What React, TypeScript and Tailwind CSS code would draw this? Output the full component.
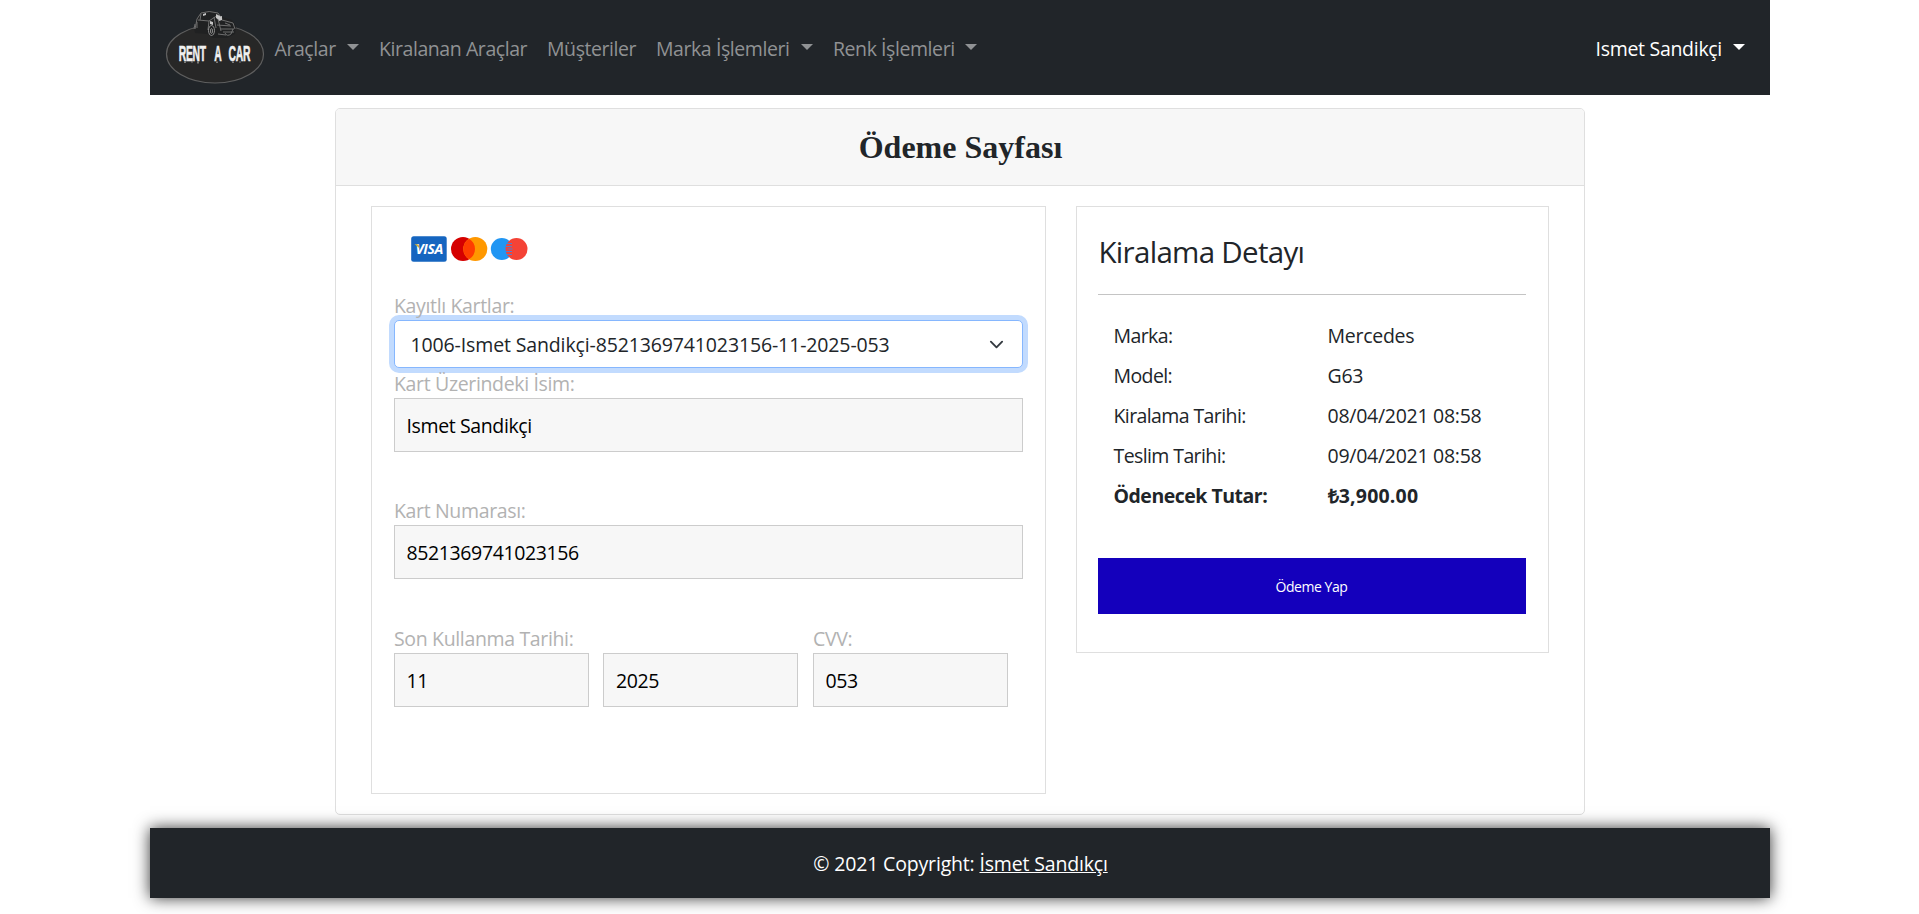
import type { ReactNode } from "react";

function Caret() {
  return (
    <svg className="mb-[5px] h-[6px] w-3 shrink-0" viewBox="0 0 12 6" fill="currentColor" aria-hidden="true">
      <path d="M0 0h12L6 6z" />
    </svg>
  );
}

function Logo() {
  return (
    <svg className="block h-[78px] w-[100px]" viewBox="0 0 100 78" aria-label="Rent a car">
      <ellipse cx="50" cy="45" rx="48.5" ry="29" fill="#272727" stroke="#5f5f5f" strokeWidth="1.2" />
      <path d="M29 19l3-9 4-7q8-3 16 0l5 5 10 3 4 6-1 8-8 4H48l-5-4-13-1z" fill="#202122" />
      <g fill="none" stroke="#777" strokeWidth="0.900">
        <path d="M30 20l2-10 4-6q8-3 17 0l4 6M33 11l11 1 9-6M44 12l-1 9M36 5l-1 6M29 20l1-5M32 13v6M57 11l11 3 2 6M52 16l14 1M56 20h13M58 23h11M53 25l8 1M53 10l3 12M49 8l2 11M60 14l5 2" />
        <ellipse cx="46.500" cy="21.500" rx="3" ry="5" stroke="#999" />
        <ellipse cx="46.500" cy="22" rx="1" ry="2.500" stroke="#999" />
        <path d="M60 24q2 4 6 1l2-5" />
      </g>
      <path d="M51 5l4 2-1 4-3-2zM38 5l3-1v2l-3 1zM53 8l4-1v4l-3 1zM45 12l3 1v3l-3-1z" fill="#c4c4c4" />
      <g
        transform="scale(0.470 1)"
        fontFamily="'Liberation Sans', sans-serif"
        fontWeight="700"
        fontSize="22"
        fill="#f1f1f1"
        stroke="#f1f1f1"
        strokeWidth="0.600"
      >
        <text x="29" y="52.500">RENT</text>
        <text x="105" y="52.500">A</text>
        <text x="135" y="52.500">CAR</text>
      </g>
      <path d="M20 52.500v1.500M27 52.500v1M33 52.500v2M52 52.500v1.500M68 52.500v1.500M75 52.500v1" stroke="#b5b5b5" strokeWidth="1.200" />
    </svg>
  );
}

function CardBrands() {
  return (
    <svg className="block h-[30px] w-[120px]" viewBox="0 0 120 30" aria-label="Visa, Mastercard, Maestro">
      <rect x="0.200" y="2.200" width="35.500" height="25.600" rx="2.500" fill="#1565c0" />
      <text
        x="18.200"
        y="19.800"
        textAnchor="middle"
        textLength="27.500"
        lengthAdjust="spacingAndGlyphs"
        fontFamily="'Open Sans', sans-serif"
        fontWeight="700"
        fontStyle="italic"
        fontSize="13.500"
        fill="#fff"
      >
        VISA
      </text>
      <path d="M3.500 10l4 .4 1.200 4z" fill="#c9a93a" />
      <circle cx="52" cy="15" r="12" fill="#d50000" />
      <circle cx="64.300" cy="15" r="12" fill="#ff9800" />
      <path d="M58.150 4.700a12 12 0 0 1 0 20.600a12 12 0 0 1 0-20.600z" fill="#ff3d00" />
      <circle cx="90.800" cy="15" r="11" fill="#2196f3" />
      <circle cx="105.500" cy="15" r="11" fill="#f44336" />
      <path d="M96 9.500h5M95 12.500h6M96.500 15h5M95 17.500h6M96 20.500h5" stroke="#4f7fd0" strokeWidth="1.200" />
    </svg>
  );
}

function Label({ children }: { children: ReactNode }) {
  return <label className="block h-[30px] pt-px pl-[0.500px] leading-[30px] text-[#b2b2b2]">{children}</label>;
}

function Field({ value }: { value: string }) {
  return (
    <input
      readOnly
      value={value}
      className="block h-[54px] w-full border border-[#ccc] bg-[#f7f7f7] pr-[11px] pl-3 tracking-[-0.380px] text-black outline-none"
    />
  );
}

const details = [
  ["Marka:", "Mercedes"],
  ["Model:", "G63"],
  ["Kiralama Tarihi:", "08/04/2021 08:58"],
  ["Teslim Tarihi:", "09/04/2021 08:58"],
];

export default function App() {
  return (
    <div className="h-[914px] overflow-hidden bg-white font-['Open_Sans',sans-serif] text-[19.500px] leading-[30px] tracking-[-0.350px] text-[#212529]">
      <div className="mx-auto w-[1620px]">
        <nav className="flex h-[95px] items-center justify-between bg-[#212529] pr-[25px] pl-[15px] tracking-[-0.430px] text-[#909294]">
          <div className="flex items-center">
            <Logo />
            <ul className="flex items-center pt-[3px] pl-[10px]">
              <li className="flex w-[104.500px] items-center justify-between pr-[20.500px]">Araçlar<Caret /></li>
              <li className="w-[168px]">Kiralanan Araçlar</li>
              <li className="w-[109px]">Müşteriler</li>
              <li className="flex w-[177px] items-center justify-between pr-5">Marka İşlemleri<Caret /></li>
              <li className="flex w-[144px] items-center justify-between">Renk İşlemleri<Caret /></li>
            </ul>
          </div>
          <div className="flex items-center gap-[10.500px] pt-[3px] tracking-[-0.300px] text-white">Ismet Sandikçi<Caret /></div>
        </nav>

        <main className="mx-auto mt-[13px] h-[707px] w-[1250px] rounded-[5px] border border-[#dfdfdf]">
          <header className="flex h-[77px] items-center justify-center rounded-t-[4px] border-b border-[#dfdfdf] bg-[#f7f7f7]">
            <h1 className="pl-0.5 font-['Liberation_Serif',serif] text-[32px] font-bold tracking-normal">Ödeme Sayfası</h1>
          </header>

          <div className="flex items-start gap-[30px] pt-5 pl-[35px]">
            <section className="h-[588px] w-[675px] border border-[#dfdfdf] px-[22px]">
              <div className="pt-[27px] pb-[26px] pl-[17px]">
                <CardBrands />
              </div>
              <Label>Kayıtlı Kartlar:</Label>
              <div className="flex h-12 items-center justify-between rounded-[5px] border border-[#86b7fe] bg-white pr-[18px] pl-4 tracking-[-0.130px] ring-[5px] ring-[#c2dbfe]">
                <span className="pt-0.5">1006-Ismet Sandikçi-8521369741023156-11-2025-053</span>
                <svg className="size-[15px]" viewBox="0 0 16 16" fill="none" stroke="#343a40" strokeWidth="2" strokeLinecap="round" strokeLinejoin="round" aria-hidden="true">
                  <path d="M2 5l6 6 6-6" />
                </svg>
              </div>
              <Label>Kart Üzerindeki İsim:</Label>
              <Field value="Ismet Sandikçi" />
              <div className="pt-[43px]">
                <Label>Kart Numarası:</Label>
                <Field value="8521369741023156" />
              </div>
              <div className="grid grid-cols-[195px_195px_195px] items-end gap-[14.500px] pt-11">
                <div>
                  <Label>Son Kullanma Tarihi:</Label>
                  <Field value="11" />
                </div>
                <Field value="2025" />
                <div>
                  <Label>CVV:</Label>
                  <Field value="053" />
                </div>
              </div>
            </section>

            <section className="h-[447px] w-[473px] border border-[#dfdfdf] pr-[22px] pl-[21px]">
              <h2 className="pt-[27px] pl-px text-[29.500px] leading-9 tracking-[-0.700px]">Kiralama Detayı</h2>
              <hr className="mt-6 border-[#c4c4c4]" />
              <dl className="pt-[21px] pl-4">
                {details.map(([name, value]) => (
                  <div key={name} className="flex h-10 items-center">
                    <dt className="w-[214px] tracking-[-0.600px]">{name}</dt>
                    <dd className="tracking-[-0.270px]">{value}</dd>
                  </div>
                ))}
                <div className="flex h-10 items-center font-bold">
                  <dt className="w-[214px] tracking-[-0.500px]">Ödenecek Tutar:</dt>
                  <dd className="tracking-[0.200px]">₺3,900.00</dd>
                </div>
              </dl>
              <button className="mt-[42px] block h-14 w-full bg-[#1400bc] pt-px text-[14px] tracking-[-0.450px] text-white">Ödeme Yap</button>
            </section>
          </div>
        </main>

        <footer className="mt-[13px] flex h-[70px] items-center justify-center bg-[#212529] pt-0.5 pl-0.5 tracking-[-0.170px] text-white shadow-[0_0_15px_rgba(0,0,0,0.8)]">
          <p>
            © 2021 Copyright: <a className="underline">İsmet Sandıkçı</a>
          </p>
        </footer>
      </div>
    </div>
  );
}
